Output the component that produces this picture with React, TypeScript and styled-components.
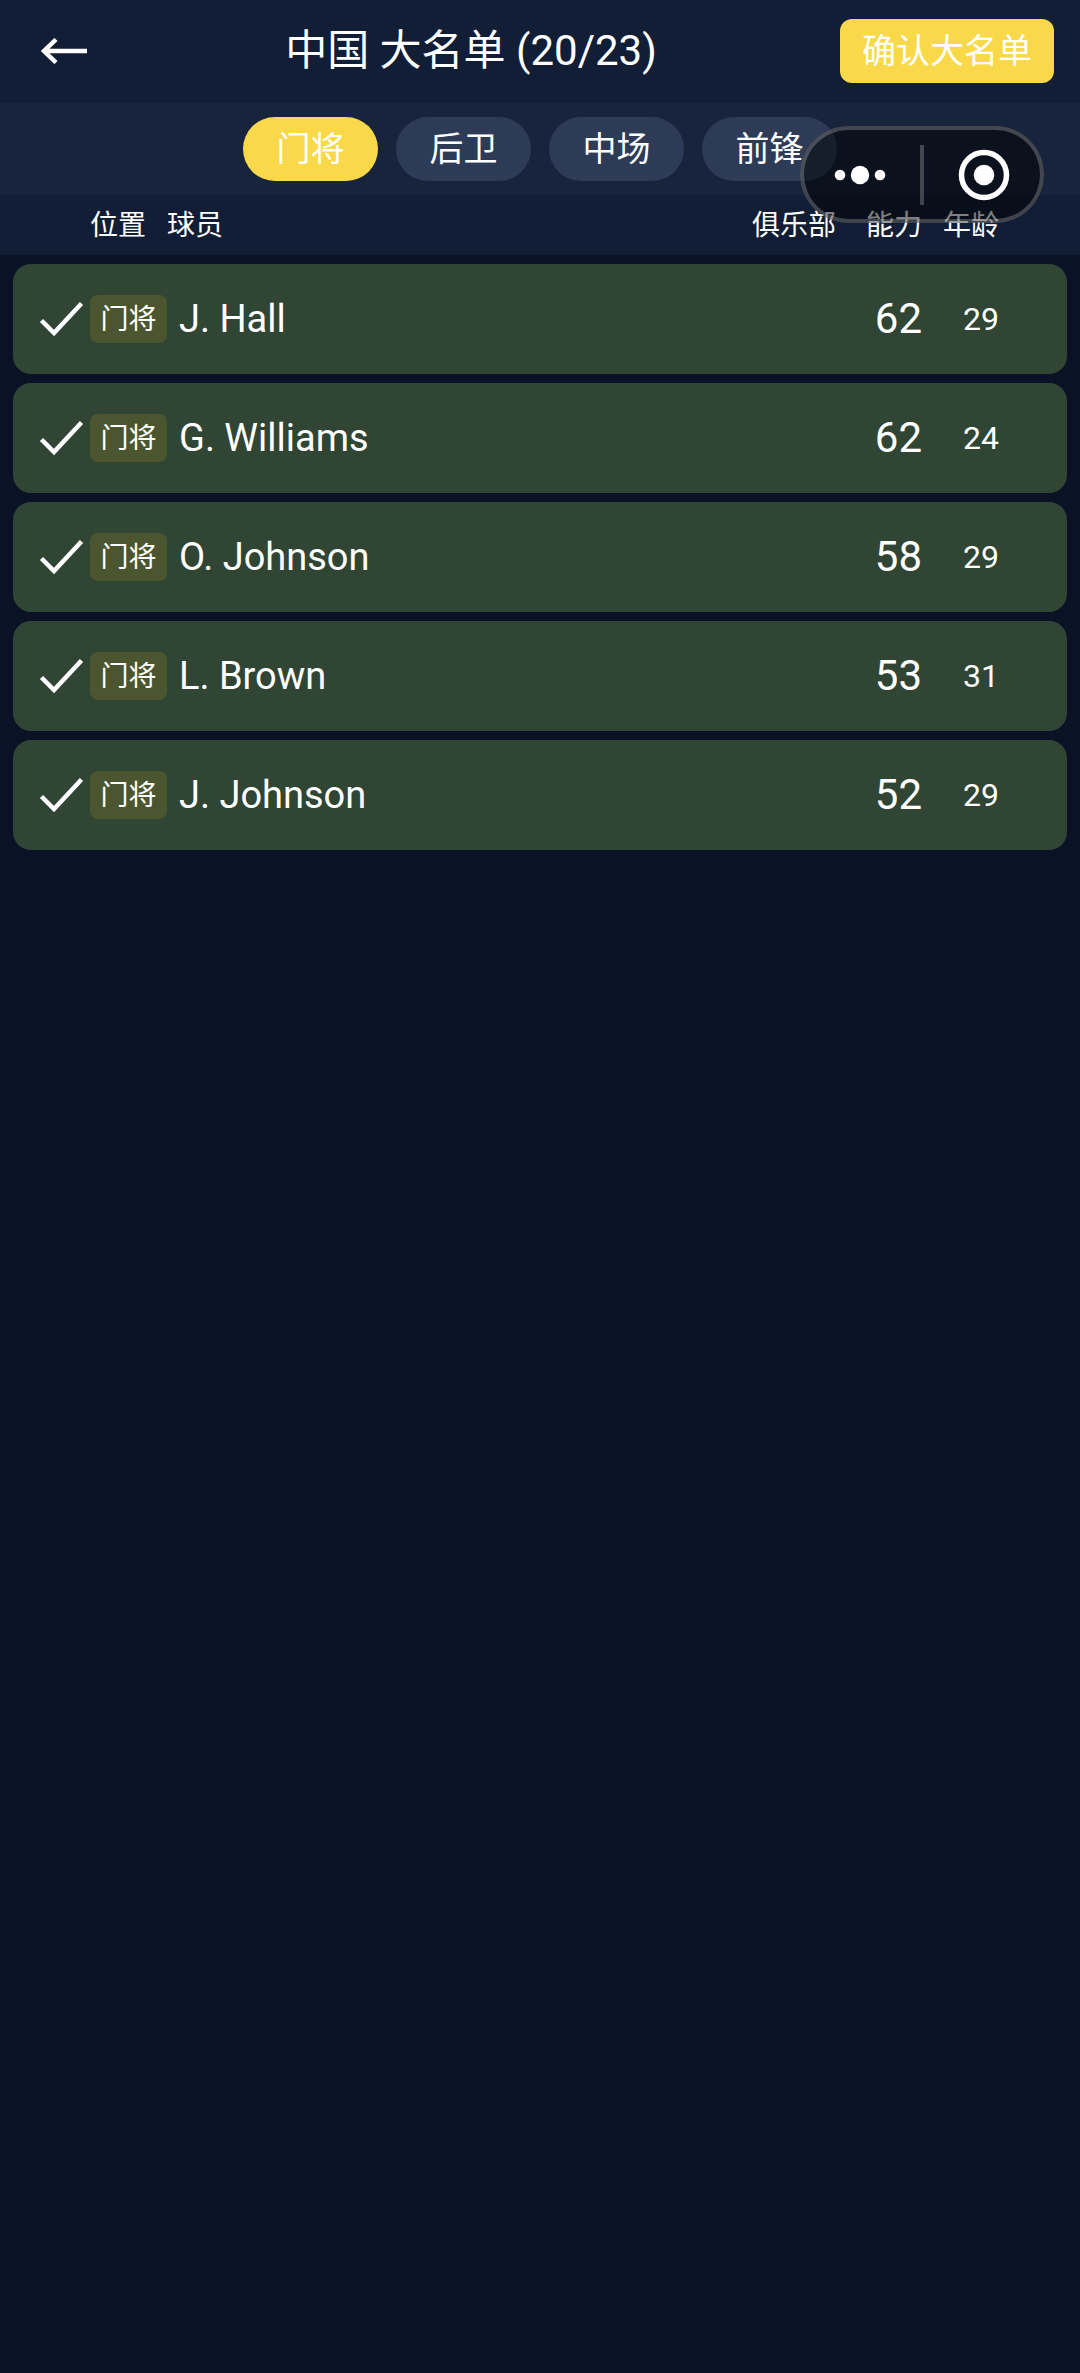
import React, { useState } from 'react';
import styled, { createGlobalStyle } from 'styled-components';

/**
 * Constants
 */
const FONT = `Roboto, 'Noto Sans CJK SC', sans-serif`;

const GRID = '51px 77px 1fr 97px 86px 77px';

const SQUAD_SIZE = 23;

const TABS = ['门将', '后卫', '中场', '前锋'];

const PLAYERS: IPlayer[] = [
    { id: 1, position: '门将', name: 'J. Hall', club: '', ability: 62, age: 29 },
    { id: 2, position: '门将', name: 'G. Williams', club: '', ability: 62, age: 24 },
    { id: 3, position: '门将', name: 'O. Johnson', club: '', ability: 58, age: 29 },
    { id: 4, position: '门将', name: 'L. Brown', club: '', ability: 53, age: 31 },
    { id: 5, position: '门将', name: 'J. Johnson', club: '', ability: 52, age: 29 },
];

// players already picked on the other tabs
const PICKED_ELSEWHERE = 15;

/**
 * Props
 */
interface IPlayer {
    id: number,
    position: string,
    name: string,
    club: string,
    ability: number,
    age: number,
}

interface IPlayerRowProps {
    player: IPlayer,
    selected: boolean,
    onToggle: (id: number) => void,
}

/**
 * Styled Components
 */
const GlobalStyle = createGlobalStyle`
    * {
        box-sizing: border-box;
    }

    body {
        margin: 0;
        background: #0a1325;
        color: #ffffff;
        font-family: ${FONT};
    }

    button {
        border: none;
        padding: 0;
        color: inherit;
        font-family: inherit;
        cursor: pointer;
    }
`;

const Page = styled.div`
    min-height: 100vh;
`;

const Header = styled.header`
    display: flex;
    align-items: center;
    justify-content: space-between;
    height: 103px;
    padding: 0 26px 2px;
    background: #121e35;
`;

const BackButton = styled.button`
    display: flex;
    align-items: center;
    justify-content: center;
    width: 76px;
    height: 64px;
    background: none;
`;

const Title = styled.h1`
    margin: 0;
    font-size: 42px;
    font-weight: 400;
    line-height: 64px;
    white-space: nowrap;
`;

const ConfirmButton = styled.button`
    height: 64px;
    padding: 0 22px;
    border-radius: 12px;
    background: #f9d949;
    font-size: 34px;
    line-height: 64px;
    white-space: nowrap;
`;

const TabBar = styled.nav`
    display: flex;
    justify-content: center;
    gap: 18px;
    padding: 14px 0;
    background: #18243b;
`;

const Tab = styled.button<{ $active: boolean }>`
    width: 135px;
    height: 64px;
    border-radius: 32px;
    background: ${({ $active }) => ($active ? '#f9d949' : '#2d3b57')};
    font-size: 34px;
    line-height: 64px;
`;

const Table = styled.table`
    display: block;
`;

const TableHead = styled.thead`
    display: block;
    padding: 0 13px;
    background: #121e35;
`;

const HeadRow = styled.tr`
    display: grid;
    grid-template-columns: ${GRID};
    align-items: center;
    height: 60px;
    padding: 2px 68px 0 26px;
`;

const HeadCell = styled.th<{ $right?: boolean }>`
    padding: 0;
    font-size: 28px;
    font-weight: 400;
    line-height: 40px;
    text-align: ${({ $right }) => ($right ? 'right' : 'left')};
`;

const TableBody = styled.tbody`
    display: flex;
    flex-direction: column;
    gap: 9px;
    padding: 9px 13px;
`;

const BodyRow = styled.tr<{ $selected: boolean }>`
    display: grid;
    grid-template-columns: ${GRID};
    align-items: center;
    height: 110px;
    padding: 0 68px 0 26px;
    border-radius: 18px;
    background: ${({ $selected }) => ($selected ? '#304534' : '#18243b')};
`;

const Cell = styled.td`
    padding: 0;
    line-height: 48px;
`;

const NameCell = styled(Cell)`
    padding-left: 12px;
    font-size: 38px;
    white-space: nowrap;
`;

const AbilityCell = styled(Cell)`
    font-size: 42px;
    line-height: 50px;
    text-align: right;
`;

const AgeCell = styled(Cell)`
    font-size: 32px;
    text-align: right;
`;

const CheckLabel = styled.label`
    display: flex;
    align-items: center;
    height: 48px;
    cursor: pointer;
`;

const CheckInput = styled.input`
    position: absolute;
    opacity: 0;

    &:not(:checked) + svg {
        visibility: hidden;
    }
`;

const Badge = styled.span`
    display: block;
    height: 48px;
    border-radius: 8px;
    background: #4b5630;
    font-size: 28px;
    line-height: 50px;
    text-align: center;
`;

// host capsule floats above the page
const Capsule = styled.div`
    position: fixed;
    top: 126px;
    right: 36px;
    display: flex;
    align-items: center;
    width: 244px;
    height: 97px;
    border-radius: 49px;
    background: rgba(0, 0, 0, 0.5);
    box-shadow: inset 0 0 0 4px rgba(255, 255, 255, 0.22);
`;

const CapsuleButton = styled.button`
    display: flex;
    flex: 1;
    align-items: center;
    justify-content: center;
    height: 100%;
    background: none;
`;

const CapsuleDivider = styled.span`
    width: 4px;
    height: 60px;
    background: rgba(255, 255, 255, 0.22);
`;

/**
 * Icons
 */
const BackIcon = () => (
    <svg width="46" height="26" viewBox="0 0 46 26" fill="none" aria-hidden="true">
        <path d="M46 13H3M15 1.5L3 13L15 24.5" stroke="#ffffff" strokeWidth="4.5" />
    </svg>
);

const CheckIcon = () => (
    <svg width="46" height="36" viewBox="0 0 46 36" fill="none" aria-hidden="true">
        <path d="M2.5 19.5L15 32L42.5 2.5" stroke="#ffffff" strokeWidth="4.5" />
    </svg>
);

const MoreIcon = () => (
    <svg width="52" height="20" viewBox="0 0 52 20" fill="#ffffff" aria-hidden="true">
        <circle cx="6" cy="10" r="5.3" />
        <circle cx="26" cy="10" r="9.2" />
        <circle cx="46" cy="10" r="5.3" />
    </svg>
);

const CloseIcon = () => (
    <svg width="52" height="52" viewBox="0 0 52 52" fill="none" aria-hidden="true">
        <circle cx="26" cy="26" r="22.5" stroke="#ffffff" strokeWidth="5.5" />
        <circle cx="26" cy="26" r="10.3" fill="#ffffff" />
    </svg>
);

/**
 * Player Row
 */
const PlayerRow = ({ player, selected, onToggle }: IPlayerRowProps) => (
    <BodyRow $selected={selected}>
        <Cell>
            <CheckLabel>
                <CheckInput
                    type="checkbox"
                    aria-label={player.name}
                    checked={selected}
                    onChange={() => onToggle(player.id)}
                />
                <CheckIcon />
            </CheckLabel>
        </Cell>
        <Cell>
            <Badge>{player.position}</Badge>
        </Cell>
        <NameCell>{player.name}</NameCell>
        <Cell>{player.club}</Cell>
        <AbilityCell>{player.ability}</AbilityCell>
        <AgeCell>{player.age}</AgeCell>
    </BodyRow>
);

/**
 * Main Components
 */
const App = () => {
    const [activeTab, setActiveTab] = useState(TABS[0]);
    const [selected, setSelected] = useState<number[]>(PLAYERS.map(player => player.id));

    const toggle = (id: number) => {
        setSelected(prev => (
            prev.includes(id) ? prev.filter(item => item !== id) : [...prev, id]
        ));
    };

    return (
        <Page>
            <GlobalStyle />
            <Header>
                <BackButton aria-label="返回">
                    <BackIcon />
                </BackButton>
                <Title>
                    中国 大名单 ({PICKED_ELSEWHERE + selected.length}/{SQUAD_SIZE})
                </Title>
                <ConfirmButton>确认大名单</ConfirmButton>
            </Header>
            <TabBar>
                {TABS.map(tab => (
                    <Tab
                        key={tab}
                        $active={tab === activeTab}
                        onClick={() => setActiveTab(tab)}
                    >
                        {tab}
                    </Tab>
                ))}
            </TabBar>
            <Table>
                <TableHead>
                    <HeadRow>
                        <HeadCell />
                        <HeadCell>位置</HeadCell>
                        <HeadCell>球员</HeadCell>
                        <HeadCell $right>俱乐部</HeadCell>
                        <HeadCell $right>能力</HeadCell>
                        <HeadCell $right>年龄</HeadCell>
                    </HeadRow>
                </TableHead>
                <TableBody>
                    {PLAYERS.filter(player => player.position === activeTab).map(player => (
                        <PlayerRow
                            key={player.id}
                            player={player}
                            selected={selected.includes(player.id)}
                            onToggle={toggle}
                        />
                    ))}
                </TableBody>
            </Table>
            <Capsule>
                <CapsuleButton aria-label="更多">
                    <MoreIcon />
                </CapsuleButton>
                <CapsuleDivider />
                <CapsuleButton aria-label="关闭">
                    <CloseIcon />
                </CapsuleButton>
            </Capsule>
        </Page>
    );
}

export default App;
